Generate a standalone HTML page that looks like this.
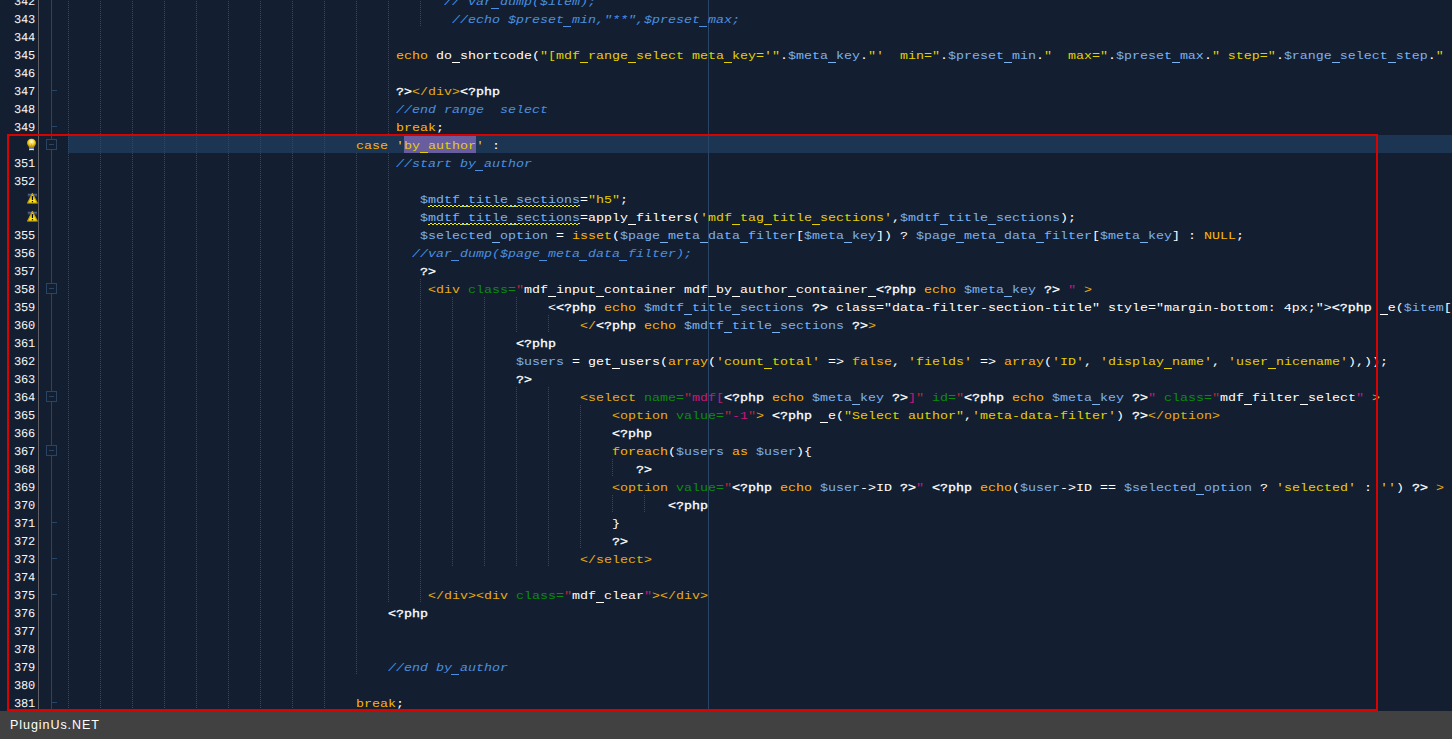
<!DOCTYPE html>
<html><head><meta charset="utf-8"><title>editor</title>
<style>
html,body{margin:0;padding:0;}
body{width:1452px;height:739px;overflow:hidden;background:#131f31;position:relative;font-family:"Liberation Mono",monospace;}
#ed{position:absolute;left:0;top:0;width:1452px;height:711px;overflow:hidden;background:#131f31;}
.ln{position:absolute;left:68px;height:18px;line-height:18px;font-size:13.333px;white-space:pre;color:#ffffff;letter-spacing:0;transform:scaleY(0.88);transform-origin:0 12.5px;}
.num{position:absolute;left:0;width:35px;text-align:right;height:18px;line-height:18px;font-size:12px;letter-spacing:-0.2px;text-rendering:geometricPrecision;color:#f8f8f8;white-space:pre;}
.k{color:#fab800}.s{color:#e4d000}.v{color:#7ab2f0}.c{color:#4a8fe0;font-style:italic}.p{color:#ffffff;-webkit-text-stroke:0.350px #ffffff}
.t{color:#e6ac14}.a{color:#0c8c0c}.q{color:#c4222e}.m{color:#c4187e}
.w{color:#7ab2f0}
.sel{color:#e4d000}
.u{position:absolute;height:1px;background:currentColor;color:#ffffff}
.u.k{color:#fab800}.u.s,.u.sel{color:#e4d000}.u.v,.u.w{color:#7ab2f0}.u.c{color:#4a8fe0;margin-left:-1px}.u.m{color:#c4187e}
.wave{position:absolute;height:2px;background-image:linear-gradient(90deg,#f2f200 0 2px,transparent 2px 4px),linear-gradient(90deg,transparent 0 2px,#f2f200 2px 4px);background-size:4px 1px,4px 1px;background-repeat:repeat-x,repeat-x;background-position:0 1px,0 0;}
#selbg{position:absolute;left:404px;top:135px;width:72px;height:18px;background:#675d9f;}
#hl{position:absolute;left:68px;top:135px;width:1384px;height:18px;background:#1c3552;}
#sep{position:absolute;left:38px;top:0;width:1px;height:711px;background:#5e5e63;}
#fold{position:absolute;left:51px;top:0;width:1px;height:711px;background:#294563;}
#margin{position:absolute;left:708px;top:0;width:1px;height:711px;background:#294563;}
.tick{position:absolute;left:52px;width:5px;height:1px;background:#294563;}
.box{position:absolute;left:46px;width:9px;height:9px;border:1px solid #294563;background:#131f31;}
.box i{position:absolute;left:2px;top:4px;width:5px;height:1px;background:#294563;}
#red{position:absolute;left:7px;top:134px;width:1367px;height:573px;border:2px solid #d80300;}
#status{position:absolute;left:0;top:711px;width:1452px;height:28px;background:#414141;}
#status span{position:absolute;left:10px;top:7px;font-family:"Liberation Sans",sans-serif;font-size:12.5px;line-height:14px;color:#ffffff;letter-spacing:0.95px;white-space:pre;}
svg{position:absolute;left:0;top:0;}
</style></head><body>
<div id="ed">
<div id="hl"></div><div id="selbg"></div>
<svg width="1452" height="711" viewBox="0 0 1452 711" shape-rendering="crispEdges"><path d="M68.5 -9V711M100.5 -9V711M132.5 -9V711M164.5 -9V711M196.5 -9V711M228.5 -9V711M260.5 -9V711M292.5 -9V711M324.5 -9V711M356.5 -9V135M356.5 153V675M388.5 -9V135M388.5 153V603M420.5 -9V27M420.5 279V603M452.5 297V567M484.5 297V567M516.5 297V333M516.5 387V567M548.5 315V333M548.5 387V567M580.5 405V549M612.5 459V477M612.5 495V513M644.5 495V513" stroke="#2e4965" stroke-width="1" stroke-dasharray="1 1" fill="none"/></svg>
<div id="margin"></div><div id="sep"></div><div id="fold"></div>
<div class="tick" style="top:90px"></div><div class="tick" style="top:126px"></div><div class="tick" style="top:522px"></div><div class="tick" style="top:558px"></div><div class="tick" style="top:594px"></div><div class="tick" style="top:702px"></div><div class="box" style="top:139px"><i></i></div><div class="box" style="top:283px"><i></i></div><div class="box" style="top:391px"><i></i></div><div class="box" style="top:445px"><i></i></div>
<div class="num" style="top:-7px">342</div><i class="u c" style="left:492px;top:8px;width:8px"></i><div class="ln" style="top:-7.5px;left:444px"><span class="c">// var dump($item);</span></div>
<div class="num" style="top:11px">343</div><i class="u c" style="left:564px;top:26px;width:8px"></i><i class="u c" style="left:700px;top:26px;width:8px"></i><div class="ln" style="top:10.5px;left:452px"><span class="c">//echo $preset min,"**",$preset max;</span></div>
<div class="num" style="top:29px">344</div>
<div class="num" style="top:47px">345</div><i class="u d" style="left:452px;top:62px;width:8px"></i><i class="u s" style="left:580px;top:62px;width:8px"></i><i class="u s" style="left:628px;top:62px;width:8px"></i><i class="u s" style="left:724px;top:62px;width:8px"></i><i class="u v" style="left:828px;top:62px;width:8px"></i><i class="u v" style="left:1004px;top:62px;width:8px"></i><i class="u v" style="left:1172px;top:62px;width:8px"></i><i class="u v" style="left:1332px;top:62px;width:8px"></i><i class="u v" style="left:1388px;top:62px;width:8px"></i><div class="ln" style="top:46.5px;left:396px"><span class="k">echo</span> do shortcode(<span class="s">"[mdf range select meta key='"</span>.<span class="v">$meta key</span>.<span class="s">"'  min="</span>.<span class="v">$preset min</span>.<span class="s">"  max="</span>.<span class="v">$preset max</span>.<span class="s">" step="</span>.<span class="v">$range select step</span>.<span class="s">"</span></div>
<div class="num" style="top:65px">346</div>
<div class="num" style="top:83px">347</div><div class="ln" style="top:82.5px;left:396px"><span class="p">?&gt;</span><span class="t">&lt;/div&gt;</span><span class="p">&lt;?php</span></div>
<div class="num" style="top:101px">348</div><div class="ln" style="top:100.5px;left:396px"><span class="c">//end range  select</span></div>
<div class="num" style="top:119px">349</div><div class="ln" style="top:118.5px;left:396px"><span class="k">break</span>;</div>
<svg style="left:26px;top:138px" width="12" height="15" viewBox="0 0 12 15"><defs><radialGradient id="bg" cx="5.500" cy="4" r="5.200" gradientUnits="userSpaceOnUse"><stop offset="0" stop-color="#ffffff"/><stop offset=".28" stop-color="#fff3a0"/><stop offset=".62" stop-color="#f1c21a"/><stop offset="1" stop-color="#b07e00"/></radialGradient></defs><path d="M5.500 .8C2.800 .8 1 2.700 1 5.100c0 1.500 .8 2.400 1.500 3.300.4.500.5 1 .5 1.600h5c0-.6.100-1.100.5-1.600C9.200 7.500 10 6.600 10 5.100 10 2.700 8.200 .8 5.500 .8z" fill="url(#bg)"/><path d="M4.300 4.900l1.200 1 1.200-1M5.500 5.900v3.600" stroke="#c89a10" stroke-width=".7" fill="none" opacity=".8"/><rect x="3" y="9.900" width="5" height="1" fill="#5577b8"/><rect x="3.200" y="10.800" width="4.600" height="1.500" fill="#f0f0f4"/><rect x="4" y="12.300" width="3" height="1" fill="#1c2230"/></svg><i class="u sel" style="left:420px;top:152px;width:8px"></i><div class="ln" style="top:136.5px;left:356px"><span class="k">case</span> <span class="s">'</span><span class="sel">by author</span><span class="s">'</span> :</div>
<div class="num" style="top:155px">351</div><i class="u c" style="left:476px;top:170px;width:8px"></i><div class="ln" style="top:154.5px;left:396px"><span class="c">//start by author</span></div>
<div class="num" style="top:173px">352</div>
<svg style="left:26px;top:192px" width="13" height="13" viewBox="0 0 13 13"><defs><linearGradient id="wg353" x1="0" y1="0" x2="0" y2="1"><stop offset="0" stop-color="#60729a"/><stop offset="1" stop-color="#60729a" stop-opacity="0"/></linearGradient></defs><rect x="1.800" y="1.800" width="9.200" height="3.600" fill="url(#wg353)"/><path d="M6.400 1.500L11.200 11H1.700z" fill="#f8e228" stroke="#c8a200" stroke-width="1.200" stroke-linejoin="round"/><path d="M1.500 11.400H11.400" stroke="#94700a" stroke-width=".8"/><rect x="5.800" y="4" width="1.300" height="4.100" rx=".5" fill="#000"/><rect x="5.800" y="9" width="1.300" height="1.200" rx=".5" fill="#000"/></svg><i class="u w" style="left:460px;top:206px;width:8px"></i><i class="u w" style="left:508px;top:206px;width:8px"></i><div class="ln" style="top:190.5px;left:420px"><span class="v">$</span><span class="w">mdtf title sections</span>=<span class="s">"h5"</span>;</div><div class="wave" style="top:205px;left:428px;width:152px"></div>
<svg style="left:26px;top:210px" width="13" height="13" viewBox="0 0 13 13"><defs><linearGradient id="wg354" x1="0" y1="0" x2="0" y2="1"><stop offset="0" stop-color="#60729a"/><stop offset="1" stop-color="#60729a" stop-opacity="0"/></linearGradient></defs><rect x="1.800" y="1.800" width="9.200" height="3.600" fill="url(#wg354)"/><path d="M6.400 1.500L11.200 11H1.700z" fill="#f8e228" stroke="#c8a200" stroke-width="1.200" stroke-linejoin="round"/><path d="M1.500 11.400H11.400" stroke="#94700a" stroke-width=".8"/><rect x="5.800" y="4" width="1.300" height="4.100" rx=".5" fill="#000"/><rect x="5.800" y="9" width="1.300" height="1.200" rx=".5" fill="#000"/></svg><i class="u w" style="left:460px;top:224px;width:8px"></i><i class="u w" style="left:508px;top:224px;width:8px"></i><i class="u d" style="left:628px;top:224px;width:8px"></i><i class="u s" style="left:732px;top:224px;width:8px"></i><i class="u s" style="left:764px;top:224px;width:8px"></i><i class="u s" style="left:812px;top:224px;width:8px"></i><i class="u v" style="left:940px;top:224px;width:8px"></i><i class="u v" style="left:988px;top:224px;width:8px"></i><div class="ln" style="top:208.5px;left:420px"><span class="v">$</span><span class="w">mdtf title sections</span>=apply filters(<span class="s">'mdf tag title sections'</span>,<span class="v">$mdtf title sections</span>);</div><div class="wave" style="top:223px;left:428px;width:152px"></div>
<div class="num" style="top:227px">355</div><i class="u v" style="left:492px;top:242px;width:8px"></i><i class="u v" style="left:660px;top:242px;width:8px"></i><i class="u v" style="left:700px;top:242px;width:8px"></i><i class="u v" style="left:740px;top:242px;width:8px"></i><i class="u v" style="left:844px;top:242px;width:8px"></i><i class="u v" style="left:956px;top:242px;width:8px"></i><i class="u v" style="left:996px;top:242px;width:8px"></i><i class="u v" style="left:1036px;top:242px;width:8px"></i><i class="u v" style="left:1140px;top:242px;width:8px"></i><div class="ln" style="top:226.5px;left:420px"><span class="v">$selected option</span> = <span class="k">isset</span>(<span class="v">$page meta data filter</span>[<span class="v">$meta key</span>]) ? <span class="v">$page meta data filter</span>[<span class="v">$meta key</span>] : <span class="k">NULL</span>;</div>
<div class="num" style="top:245px">356</div><i class="u c" style="left:452px;top:260px;width:8px"></i><i class="u c" style="left:540px;top:260px;width:8px"></i><i class="u c" style="left:580px;top:260px;width:8px"></i><i class="u c" style="left:620px;top:260px;width:8px"></i><div class="ln" style="top:244.5px;left:412px"><span class="c">//var dump($page meta data filter);</span></div>
<div class="num" style="top:263px">357</div><div class="ln" style="top:262.5px;left:420px"><span class="p">?&gt;</span></div>
<div class="num" style="top:281px">358</div><i class="u d" style="left:548px;top:296px;width:8px"></i><i class="u d" style="left:596px;top:296px;width:8px"></i><i class="u d" style="left:708px;top:296px;width:8px"></i><i class="u d" style="left:732px;top:296px;width:8px"></i><i class="u d" style="left:788px;top:296px;width:8px"></i><i class="u d" style="left:868px;top:296px;width:8px"></i><i class="u v" style="left:1004px;top:296px;width:8px"></i><div class="ln" style="top:280.5px;left:428px"><span class="t">&lt;div</span> <span class="a">class=</span><span class="q">"</span>mdf input container mdf by author container <span class="p">&lt;?php</span> <span class="k">echo</span> <span class="v">$meta key</span> <span class="p">?&gt;</span> <span class="m">"</span> <span class="t">&gt;</span></div>
<div class="num" style="top:299px">359</div><i class="u v" style="left:684px;top:314px;width:8px"></i><i class="u v" style="left:732px;top:314px;width:8px"></i><i class="u d" style="left:1380px;top:314px;width:8px"></i><div class="ln" style="top:298.5px;left:548px">&lt;<span class="p">&lt;?php</span> <span class="k">echo</span> <span class="v">$mdtf title sections</span> <span class="p">?&gt;</span> class="data-filter-section-title" style="margin-bottom: 4px;"&gt;<span class="p">&lt;?php</span>  e(<span class="v">$item</span>[</div>
<div class="num" style="top:317px">360</div><i class="u v" style="left:724px;top:332px;width:8px"></i><i class="u v" style="left:772px;top:332px;width:8px"></i><div class="ln" style="top:316.5px;left:580px"><span class="t">&lt;/</span><span class="p">&lt;?php</span> <span class="k">echo</span> <span class="v">$mdtf title sections</span> <span class="p">?&gt;</span><span class="t">&gt;</span></div>
<div class="num" style="top:335px">361</div><div class="ln" style="top:334.5px;left:516px"><span class="p">&lt;?php</span></div>
<div class="num" style="top:353px">362</div><i class="u d" style="left:612px;top:368px;width:8px"></i><i class="u s" style="left:764px;top:368px;width:8px"></i><i class="u s" style="left:1164px;top:368px;width:8px"></i><i class="u s" style="left:1268px;top:368px;width:8px"></i><div class="ln" style="top:352.5px;left:516px"><span class="v">$users</span> = get users(<span class="k">array</span>(<span class="s">'count total'</span> =&gt; <span class="k">false</span>, <span class="s">'fields'</span> =&gt; <span class="k">array</span>(<span class="s">'ID'</span>, <span class="s">'display name'</span>, <span class="s">'user nicename'</span>),));</div>
<div class="num" style="top:371px">363</div><div class="ln" style="top:370.5px;left:516px"><span class="p">?&gt;</span></div>
<div class="num" style="top:389px">364</div><i class="u v" style="left:852px;top:404px;width:8px"></i><i class="u v" style="left:1092px;top:404px;width:8px"></i><i class="u d" style="left:1244px;top:404px;width:8px"></i><i class="u d" style="left:1300px;top:404px;width:8px"></i><div class="ln" style="top:388.5px;left:580px"><span class="t">&lt;select</span> <span class="a">name=</span><span class="q">"</span><span class="m">mdf[</span><span class="p">&lt;?php</span> <span class="k">echo</span> <span class="v">$meta key</span> <span class="p">?&gt;</span><span class="m">]</span><span class="q">"</span> <span class="a">id=</span><span class="q">"</span><span class="p">&lt;?php</span> <span class="k">echo</span> <span class="v">$meta key</span> <span class="p">?&gt;</span><span class="m">"</span> <span class="a">class=</span><span class="q">"</span>mdf filter select<span class="m">"</span> <span class="t">&gt;</span></div>
<div class="num" style="top:407px">365</div><i class="u d" style="left:820px;top:422px;width:8px"></i><div class="ln" style="top:406.5px;left:612px"><span class="t">&lt;option</span> <span class="a">value=</span><span class="q">"</span><span class="m">-1</span><span class="q">"</span><span class="t">&gt;</span> <span class="p">&lt;?php</span>  e(<span class="s">"Select author"</span>,<span class="s">'meta-data-filter'</span>) <span class="p">?&gt;</span><span class="t">&lt;/option&gt;</span></div>
<div class="num" style="top:425px">366</div><div class="ln" style="top:424.5px;left:612px"><span class="p">&lt;?php</span></div>
<div class="num" style="top:443px">367</div><div class="ln" style="top:442.5px;left:612px"><span class="k">foreach</span>(<span class="v">$users</span> <span class="k">as</span> <span class="v">$user</span>){</div>
<div class="num" style="top:461px">368</div><div class="ln" style="top:460.5px;left:636px"><span class="p">?&gt;</span></div>
<div class="num" style="top:479px">369</div><i class="u v" style="left:1196px;top:494px;width:8px"></i><div class="ln" style="top:478.5px;left:612px"><span class="t">&lt;option</span> <span class="a">value=</span><span class="q">"</span><span class="p">&lt;?php</span> <span class="k">echo</span> <span class="v">$user</span>-&gt;ID <span class="p">?&gt;</span><span class="m">"</span> <span class="p">&lt;?php</span> <span class="k">echo</span>(<span class="v">$user</span>-&gt;ID == <span class="v">$selected option</span> ? <span class="s">'selected'</span> : <span class="s">''</span>) <span class="p">?&gt;</span> <span class="t">&gt;</span></div>
<div class="num" style="top:497px">370</div><div class="ln" style="top:496.5px;left:668px"><span class="p">&lt;?php</span></div>
<div class="num" style="top:515px">371</div><div class="ln" style="top:514.5px;left:612px">}</div>
<div class="num" style="top:533px">372</div><div class="ln" style="top:532.5px;left:612px"><span class="p">?&gt;</span></div>
<div class="num" style="top:551px">373</div><div class="ln" style="top:550.5px;left:580px"><span class="t">&lt;/select&gt;</span></div>
<div class="num" style="top:569px">374</div>
<div class="num" style="top:587px">375</div><i class="u d" style="left:596px;top:602px;width:8px"></i><div class="ln" style="top:586.5px;left:428px"><span class="t">&lt;/div&gt;&lt;div</span> <span class="a">class=</span><span class="q">"</span>mdf clear<span class="m">"</span><span class="t">&gt;&lt;/div&gt;</span></div>
<div class="num" style="top:605px">376</div><div class="ln" style="top:604.5px;left:388px"><span class="p">&lt;?php</span></div>
<div class="num" style="top:623px">377</div>
<div class="num" style="top:641px">378</div>
<div class="num" style="top:659px">379</div><i class="u c" style="left:452px;top:674px;width:8px"></i><div class="ln" style="top:658.5px;left:388px"><span class="c">//end by author</span></div>
<div class="num" style="top:677px">380</div>
<div class="num" style="top:695px">381</div><div class="ln" style="top:694.5px;left:356px"><span class="k">break</span>;</div>
<div id="red"></div>
</div>
<div id="status"><span>PluginUs.NET</span></div>
</body></html>
